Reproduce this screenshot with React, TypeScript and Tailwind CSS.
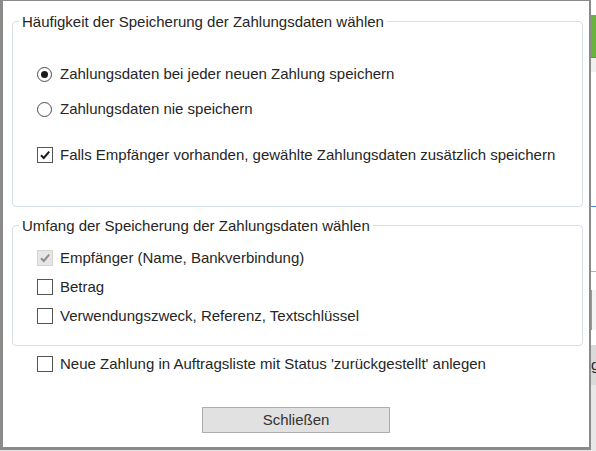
const font = { fontFamily: '"Liberation Sans", Arial, sans-serif' };

function Radio({ checked }: { checked?: boolean }) {
  return (
    <span className="flex h-4 w-4 items-center justify-start">
      <span className="flex h-[15px] w-[15px] items-center justify-center rounded-full border border-[#4d4d4d] bg-white">
        {checked && <span className="h-[7px] w-[7px] rounded-full bg-[#1a1a1a]" />}
      </span>
    </span>
  );
}

function Check({ checked, disabled }: { checked?: boolean; disabled?: boolean }) {
  return (
    <span
      className={
        disabled
          ? "flex h-4 w-4 items-center justify-center border border-[#d4d4d4] bg-[#e6e6e6]"
          : "flex h-4 w-4 items-center justify-center border border-[#555555] bg-white"
      }
    >
      {checked && (
        <svg width="12" height="12" viewBox="0 0 12 12">
          <path
            d="M2 6.2 L4.8 9 L10.2 2.6"
            fill="none"
            stroke={disabled ? "#8d8d8d" : "#1a1a1a"}
            strokeWidth="2"
          />
        </svg>
      )}
    </span>
  );
}

function Row({ control, label, className }: { control: React.ReactNode; label: string; className: string }) {
  return (
    <div className={"flex h-5 items-center pl-6 " + className}>
      {control}
      <span className="ml-[7px] leading-5">{label}</span>
    </div>
  );
}

export default function App() {
  return (
    <div className="flex h-[451px] w-[596px] bg-[#e4e4e4] text-[15px] text-[#262626]" style={font}>
      {/* dialog */}
      <div className="flex h-[450px] w-[591px] shrink-0 flex-col border-t border-r-2 border-b-[3px] border-l-[3px] border-[#8a8a8a] bg-white">
        <fieldset className="mt-[12px] ml-[9px] mr-[6px] rounded-[4px] border border-[#d7dee6] pb-[41px]">
          <legend className="ml-[6px] px-[3px] leading-[17px]">
            Häufigkeit der Speicherung der Zahlungsdaten wählen
          </legend>
          <Row className="mt-[34px]" control={<Radio checked />} label="Zahlungsdaten bei jeder neuen Zahlung speichern" />
          <Row className="mt-[15px]" control={<Radio />} label="Zahlungsdaten nie speichern" />
          <Row
            className="mt-[26px]"
            control={<Check checked />}
            label="Falls Empfänger vorhanden, gewählte Zahlungsdaten zusätzlich speichern"
          />
        </fieldset>

        <fieldset className="mt-[10px] ml-[9px] mr-[6px] rounded-[4px] border border-[#d7dee6] pb-[19px]">
          <legend className="ml-[6px] px-[3px] leading-[17px]">
            Umfang der Speicherung der Zahlungsdaten wählen
          </legend>
          <Row className="mt-[14px]" control={<Check checked disabled />} label="Empfänger (Name, Bankverbindung)" />
          <Row className="mt-[9px]" control={<Check />} label="Betrag" />
          <Row className="mt-[9px]" control={<Check />} label="Verwendungszweck, Referenz, Textschlüssel" />
        </fieldset>

        <Row
          className="mt-[8px] ml-[10px]"
          control={<Check />}
          label="Neue Zahlung in Auftragsliste mit Status 'zurückgestellt' anlegen"
        />

        <div className="mt-[33px] flex justify-center">
          <button className="h-[26px] w-[188px] border border-[#adadad] bg-[#e1e1e1] text-[15px] text-[#333333]">
            Schließen
          </button>
        </div>
      </div>

      {/* app behind the dialog */}
      <div className="flex flex-1 flex-col">
        <div className="h-[15px] bg-white" />
        <div className="h-[42px] bg-[#6ab43e]" />
        <div className="h-px bg-[#4a86c8]" />
        <div className="h-[14px] bg-[#f0f0f0]" />
        <div className="h-[134px] bg-white" />
        <div className="h-px bg-[#4a86c8]" />
        <div className="h-[64px] bg-white" />
        <div className="h-px bg-[#b0b0b0]" />
        <div className="h-[18px] bg-white" />
        <div className="h-[40px] border-l border-[#9a9a9a] bg-[#f4f4f4]" />
        <div className="h-[15px] bg-white" />
        <div className="flex h-[40px] items-center overflow-hidden bg-[#dadada] text-[15px]">g</div>
        <div className="flex-1 bg-[#e8e8e8]" />
      </div>
    </div>
  );
}
